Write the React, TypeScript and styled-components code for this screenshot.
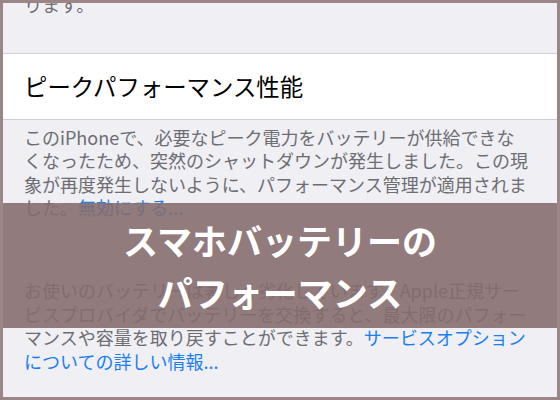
import styled, { createGlobalStyle } from 'styled-components';

const GlobalStyle = createGlobalStyle`
  html, body {
    margin: 0;
    padding: 0;
    background: #ffffff;
  }
  body {
    font-family: 'Noto Sans CJK JP', 'Noto Sans', sans-serif;
  }
`;

const Frame = styled.div`
  position: relative;
  width: 560px;
  height: 400px;
  box-sizing: border-box;
  border: 3px solid #9b8587;
  background: #efeff4;
  overflow: hidden;
`;

const Footer = styled.p<{ $top: number }>`
  margin: ${(p) => p.$top}px 0 0;
  padding: 0 10px 0 21px;
  font-size: 18px;
  line-height: 23.6px;
  color: #6d6d72;
  white-space: nowrap;
`;

const Link = styled.span`
  color: #1a7ef0;
`;

const Cell = styled.div`
  margin-top: 36px;
  height: 65px;
  display: flex;
  align-items: center;
  padding-left: 21px;
  background: #ffffff;
  border-top: 1px solid #cfced3;
  border-bottom: 1px solid #cfced3;
`;

const CellTitle = styled.span`
  font-size: 23.4px;
  color: #000000;
`;

const Banner = styled.div`
  position: absolute;
  top: 200px;
  left: -3px;
  right: -3px;
  height: 125px;
  display: flex;
  flex-direction: column;
  align-items: center;
  justify-content: center;
  background: rgba(133, 108, 109, 0.89);
`;

const BannerLine = styled.div`
  font-size: 35px;
  line-height: 52px;
  font-weight: 700;
  color: #ffffff;
`;

export default function App() {
  return (
    <>
      <GlobalStyle />
      <Frame>
        <Footer $top={-10}>ります。</Footer>
        <Cell>
          <CellTitle>ピークパフォーマンス性能</CellTitle>
        </Cell>
        <Footer $top={6}>
          このiPhoneで、必要なピーク電力をバッテリーが供給できな
          <br />
          くなったため、突然のシャットダウンが発生しました。この現
          <br />
          象が再度発生しないように、パフォーマンス管理が適用されま
          <br />
          した。<Link>無効にする...</Link>
        </Footer>
        <Footer $top={59}>
          お使いのバッテリーは著しく劣化しています。Apple正規サー
          <br />
          ビスプロバイダでバッテリーを交換すると、最大限のパフォー
          <br />
          マンスや容量を取り戻すことができます。<Link>サービスオプション</Link>
          <br />
          <Link>についての詳しい情報...</Link>
        </Footer>
        <Banner>
          <BannerLine>スマホバッテリーの</BannerLine>
          <BannerLine>パフォーマンス</BannerLine>
        </Banner>
      </Frame>
    </>
  );
}
